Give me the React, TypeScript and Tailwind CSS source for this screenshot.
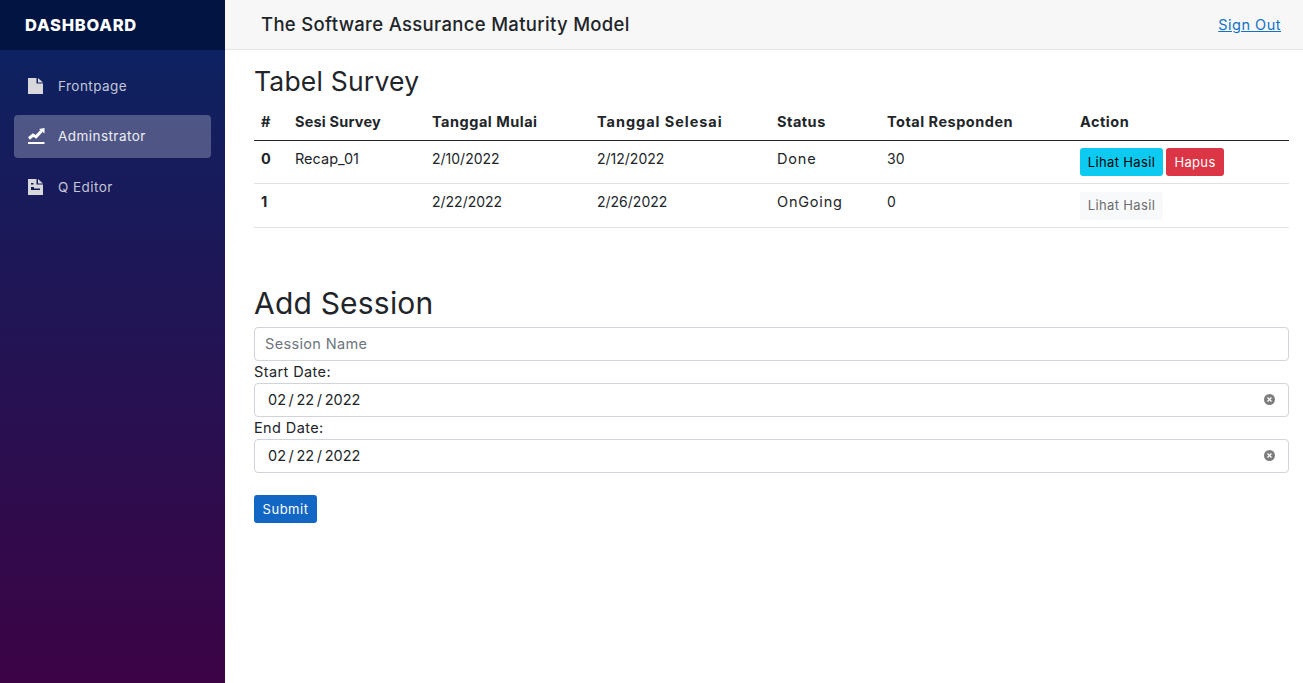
import React from "react";

const font = { fontFamily: '"Inter", "Open Sans", sans-serif' };

function NavItem({ icon, label, active }: { icon: React.ReactNode; label: string; active?: boolean }) {
  return (
    <div className={`flex h-[43px] items-center rounded-[4px] pl-[14px] ${active ? "bg-white/25 text-white/90" : "text-white/75"}`}>
      <span className="-mt-[2px] flex w-[17px] justify-start">{icon}</span>
      <span className="ml-[13px] text-[13.5px] tracking-[0.45px]">{label}</span>
    </div>
  );
}

const FileIcon = (
  <svg width="15" height="16" viewBox="0 0 15 16" fill="#d8d8dc">
    <path d="M0 0h8.500v5.500H15V16H0z" />
    <path d="M10 0l5 4.500h-5z" />
  </svg>
);
const ChartIcon = (
  <svg width="17" height="16" viewBox="0 0 17 16">
    <path d="M0 14h16.500v2H0z" fill="#fff" />
    <path d="M1 10.500 5 7l3 1.800L13.500 3" stroke="#fff" strokeWidth="3" fill="none" />
    <path d="M11 1l5.500-1v5.500z" fill="#fff" />
  </svg>
);
const DocIcon = (
  <svg width="15" height="16" viewBox="0 0 15 16" fill="#d8d8dc">
    <path fillRule="evenodd" d="M0 0h8.500v5.500H15V16H0zM3 4v1.500h2.500V4zM3 8v3h9V9.500H6V8z" />
    <path d="M10 0l5 4.500h-5z" />
  </svg>
);

function DateField() {
  return (
    <div className="flex h-[34px] items-center rounded-[4px] border border-[#ced4da] bg-white pl-[13px] pr-[13px]">
      <input readOnly value={"02\u2009/\u200922\u2009/\u20092022"} className="min-w-0 flex-1 bg-transparent text-[14.5px] text-[#212529] outline-none" />
      <svg width="11" height="11" viewBox="0 0 11 11">
        <circle cx="5.500" cy="5.500" r="5.500" fill="#7d7d7d" />
        <path d="M3.500 3.500l4 4M7.500 3.500l-4 4" stroke="#fff" strokeWidth="1.300" />
      </svg>
    </div>
  );
}

const th = "px-[7px] pb-[7px] pt-[13px] text-left align-top font-bold tracking-[0.5px]";
const td = "px-[7px] py-[7px] align-top tracking-[0.8px]";
const tdDate = "px-[7px] py-[7px] align-top text-[14px]";

export default function App() {
  return (
    <div style={font} className="flex min-h-[683px] bg-white text-[14.5px] text-[#212529]">
      <aside className="w-[225px] shrink-0 bg-[linear-gradient(180deg,#0a2463,#3c0345)]">
        <div className="flex h-[50px] items-center bg-[#021542] pl-[25px] text-[16.5px] font-extrabold tracking-[0.75px] text-white">DASHBOARD</div>
        <nav className="flex flex-col gap-[7px] px-[14px] pt-[15px]">
          <NavItem icon={FileIcon} label="Frontpage" />
          <NavItem icon={ChartIcon} label="Adminstrator" active />
          <div className="mt-px">
            <NavItem icon={DocIcon} label="Q Editor" />
          </div>
        </nav>
      </aside>
      <div className="min-w-0 flex-1">
        <header className="flex h-[50px] items-center justify-between border-b border-[#e5e5e5] bg-[#f7f7f7] pl-[36px] pr-[22px]">
          <div className="text-[18.5px] font-medium tracking-[0.32px] text-[#212529]">The Software Assurance Maturity Model</div>
          <a href="#" className="text-[14.5px] tracking-[0.5px] text-[#1272c4] underline">Sign Out</a>
        </header>
        <main className="pl-[29px] pr-[14px]">
          <h1 className="mt-[14px] text-[26.5px] leading-[34px] font-normal tracking-[0.2px]">Tabel Survey</h1>
          <table className="w-full table-fixed border-collapse">
            <colgroup>
              <col className="w-[34px]" />
              <col className="w-[137px]" />
              <col className="w-[165px]" />
              <col className="w-[180px]" />
              <col className="w-[110px]" />
              <col className="w-[193px]" />
              <col />
            </colgroup>
            <thead>
              <tr className="border-b border-[#212529]">
                <th className={th}>#</th>
                <th className="px-[7px] pb-[7px] pt-[13px] text-left align-top font-bold tracking-[0.2px]">Sesi Survey</th>
                <th className={th}>Tanggal Mulai</th>
                <th className="px-[7px] pb-[7px] pt-[13px] text-left align-top font-bold tracking-[0.95px]">Tanggal Selesai</th>
                <th className={th}>Status</th>
                <th className={th}>Total Responden</th>
                <th className={th}>Action</th>
              </tr>
            </thead>
            <tbody>
              <tr className="h-[43px] border-b border-[#dee2e6]">
                <td className={`${td} font-bold`}>0</td>
                <td className="px-[7px] py-[7px] align-top">Recap_01</td>
                <td className={tdDate}>2/10/2022</td>
                <td className={tdDate}>2/12/2022</td>
                <td className={td}>Done</td>
                <td className={tdDate}>30</td>
                <td className="px-[7px] py-[7px] align-top">
                  <div className="flex gap-[3px]">
                    <button className="h-[28px] w-[83px] rounded-[3px] bg-[#0dcaf0] pt-px text-[13px] tracking-[0.35px] text-black">Lihat Hasil</button>
                    <button className="h-[28px] w-[58px] rounded-[3px] bg-[#dc3545] pt-px text-[13px] tracking-[0.35px] text-white">Hapus</button>
                  </div>
                </td>
              </tr>
              <tr className="h-[44px] border-b border-[#dee2e6]">
                <td className={`${td} font-bold`}>1</td>
                <td className={td}></td>
                <td className={tdDate}>2/22/2022</td>
                <td className={tdDate}>2/26/2022</td>
                <td className={td}>OnGoing</td>
                <td className={tdDate}>0</td>
                <td className="px-[7px] py-[7px] align-top">
                  <button className="mt-px h-[28px] w-[83px] rounded-[3px] bg-[#f8f9fa] text-[13px] tracking-[0.35px] text-[#6c6c6c]">Lihat Hasil</button>
                </td>
              </tr>
            </tbody>
          </table>
          <h2 className="mt-[56px] text-[30px] leading-[38px] font-normal tracking-[0.2px]">Add Session</h2>
          <form className="mt-[5px]">
            <input placeholder="Session Name" className="block h-[34px] w-full rounded-[4px] border border-[#ced4da] px-[10px] text-[14.5px] tracking-[0.35px] outline-none placeholder:text-[#6c757d]" />
            <label className="block h-[22px] text-[14.5px] leading-[22px] tracking-[0.4px]">Start Date:</label>
            <DateField />
            <label className="block h-[22px] text-[14.5px] leading-[22px] tracking-[0.4px]">End Date:</label>
            <DateField />
            <button type="button" className="mt-[22px] h-[28px] w-[63px] rounded-[3px] bg-[#1266c4] pt-px text-[13px] tracking-[0.5px] text-white">Submit</button>
          </form>
        </main>
      </div>
    </div>
  );
}
